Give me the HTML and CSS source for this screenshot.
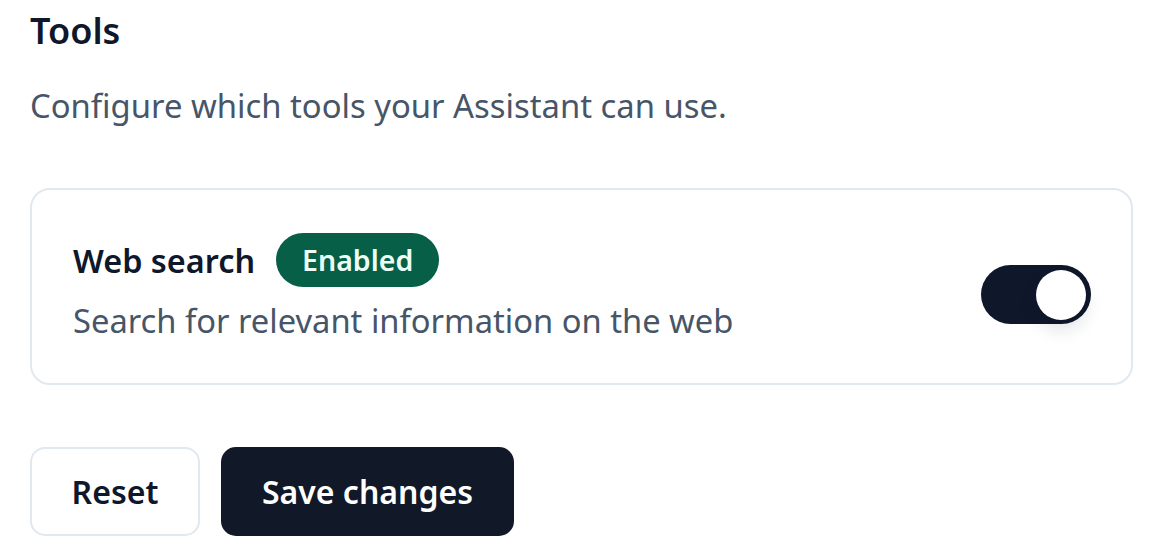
FILE: index.html
```html
<!DOCTYPE html>
<html lang="en">
<head>
<meta charset="utf-8">
<title>Tools</title>
<link rel="stylesheet" href="styles.css">
</head>
<body>
<main class="page">
  <h2 class="title">Tools</h2>
  <p class="desc">Configure which tools your Assistant can use.</p>
  <section class="card">
    <div class="card-text">
      <div class="card-head">
        <span class="card-name">Web search</span>
        <span class="badge">Enabled</span>
      </div>
      <p class="card-sub">Search for relevant information on the web</p>
    </div>
    <button class="toggle" type="button" aria-pressed="true"><span class="knob"></span></button>
  </section>
  <div class="actions">
    <button class="btn btn-outline" type="button">Reset</button>
    <button class="btn btn-dark" type="button">Save changes</button>
  </div>
</main>
</body>
</html>
```
FILE: styles.css
```css
* { box-sizing: border-box; }
html, body { margin: 0; padding: 0; background: #ffffff; }
body {
  font-family: "Noto Sans", "Open Sans", sans-serif;
  color: #0f172a;
}
.page {
  width: 1133px;
  padding: 0 0 0 30px;
}
.title {
  margin: 0;
  padding-top: 6px;
  font-size: 36px;
  line-height: 50px;
  font-weight: 600;
  color: #0f172a;
}
.desc {
  margin: 25px 0 0;
  font-size: 32.8px;
  line-height: 50px;
  color: #475569;
}
.card {
  margin-top: 57px;
  height: 197px;
  border: 2px solid #e2e8f0;
  border-radius: 20px;
  padding: 4px 40px 0 41px;
  display: flex;
  align-items: center;
  justify-content: space-between;
}
.card-head {
  display: flex;
  align-items: center;
  gap: 21px;
}
.card-name {
  font-size: 32.4px;
  font-weight: 600;
  color: #0f172a;
}
.badge {
  display: inline-flex;
  align-items: center;
  height: 54px;
  padding: 0 26px;
  border-radius: 27px;
  background: #065f46;
  color: #ecfdf5;
  font-size: 28.5px;
  font-weight: 600;
}
.card-sub {
  margin: 10px 0 0;
  font-size: 32.7px;
  line-height: 48px;
  color: #475569;
}
.toggle {
  position: relative;
  width: 110px;
  height: 59px;
  margin-top: 12px;
  border: 0;
  padding: 0;
  border-radius: 30px;
  background: #0f172a;
  cursor: pointer;
}
.knob {
  position: absolute;
  top: 5px;
  right: 5px;
  width: 50px;
  height: 50px;
  border-radius: 50%;
  background: #ffffff;
  box-shadow: 0 10px 18px rgba(15, 23, 42, 0.12);
}
.actions {
  margin-top: 62px;
  display: flex;
  gap: 21px;
}
.btn {
  height: 89px;
  border-radius: 15px;
  font-family: inherit;
  font-size: 32px;
  font-weight: 600;
  cursor: pointer;
}
.btn-outline {
  width: 170px;
  background: #ffffff;
  border: 2px solid #e2e8f0;
  color: #0f172a;
}
.btn-dark {
  width: 293px;
  background: #111827;
  border: 0;
  color: #ffffff;
}
```
